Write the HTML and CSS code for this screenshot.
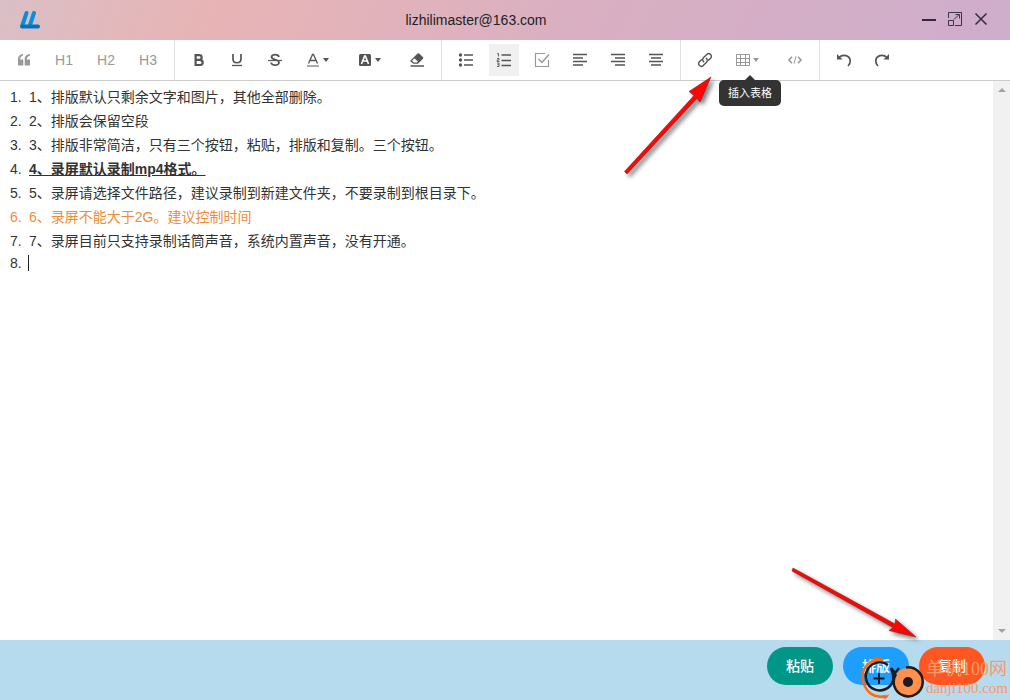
FILE: index.html
```html
<!DOCTYPE html>
<html lang="zh-CN">
<head>
<meta charset="utf-8">
<title>lizhilimaster@163.com</title>
<link rel="stylesheet" href="styles.css">
</head>
<body>
<div class="app">
  <header class="titlebar">
    <div class="brand">
      <svg width="22" height="20" viewBox="0 0 22 20" fill="none" stroke-linecap="round">
        <path d="M3.500 15 7.500 3M11 15 15 3" stroke="#0590df" stroke-width="4"/>
        <path d="M8.500 13 11.500 3.500" stroke="#c8c5d1" stroke-width="1"/>
        <path d="M3 16.500H19" stroke="#0870ba" stroke-width="4"/>
      </svg>
    </div>
    <h1 class="title">lizhilimaster@163.com</h1>
    <div class="window-controls">
      <button class="window-button" aria-label="最小化"><svg width="16" height="16" viewBox="0 0 16 16"><path d="M1 9H15" stroke="#33293b" stroke-width="2"/></svg></button>
      <button class="window-button" aria-label="最大化"><svg width="16" height="16" viewBox="0 0 16 16" fill="none" stroke="#3d3345"><path d="M1.500 7V1.500H14.500V14.500H8M1.500 9.500H6.500V14.500H1.500ZM7 8.500 12 3.500M8.500 3.500H12.500V7.500"/></svg></button>
      <button class="window-button" aria-label="关闭"><svg width="16" height="16" viewBox="0 0 16 16"><path d="M2.500 2.500 13.500 13.500M13.500 2.500 2.500 13.500" stroke="#33293b" stroke-width="1.500"/></svg></button>
    </div>
  </header>

  <div class="toolbar" role="toolbar" aria-label="编辑工具">
    <div class="group">
      <button class="tool muted" aria-label="引用"><svg width="16" height="16" viewBox="0 0 16 16" fill="currentColor"><path d="M2 13.500V7C2 4 4 2.200 7 2V3.500C5.400 3.800 4.300 5 4.100 7.500H7.300V13.500ZM8.700 13.500V7C8.700 4 11 2.200 14 2V3.500C12.400 3.800 11 5 10.800 7.500H14V13.500Z"/></svg></button>
      <button class="tool heading muted">H1</button>
      <button class="tool heading muted">H2</button>
      <button class="tool heading muted">H3</button>
    </div>
    <div class="group">
      <button class="tool" aria-label="粗体"><svg width="16" height="16" viewBox="0 0 16 16" fill="none" stroke="currentColor" stroke-width="2.200"><path d="M4.600 3.100H8C11.600 3.100 11.600 7.800 8 7.800H4.600H8.500C12.800 7.800 12.800 13 8.500 13H4.600V2"/></svg></button>
      <button class="tool" aria-label="下划线"><svg width="16" height="16" viewBox="0 0 16 16" fill="none" stroke="currentColor"><path d="M4 2V7C4 12 12 12 12 7V2" stroke-width="1.700"/><path d="M3 13.500H13" stroke-width="1.300"/></svg></button>
      <button class="tool" aria-label="删除线"><svg width="16" height="16" viewBox="0 0 16 16" fill="none" stroke="currentColor"><path d="M12 5C11.500 1.800 4.500 1.800 4.500 5C4.500 8 12 7 12 10.500C12 14.200 4.500 14 4.200 10.500" stroke-width="1.800"/><path d="M1 8.500H15" stroke-width="1.200"/></svg></button>
      <button class="tool wide" aria-label="文字颜色"><svg width="14" height="16" viewBox="0 0 14 16" fill="none" stroke="currentColor"><path d="M2.500 11.500 6.500 2.500H7.500L11.500 11.500M4 8.500H10" stroke-width="1.300"/><path d="M1 14H13" stroke-width="1"/></svg><span class="arrow"></span></button>
      <button class="tool wide" aria-label="背景色"><svg width="14" height="16" viewBox="0 0 14 16"><rect x="1" y="2" width="12" height="12" rx="1.500" fill="currentColor"/><path d="M3.500 12 6.600 4H7.400L10.500 12M4.700 9H9.300" fill="none" stroke="#fff" stroke-width="1.600"/></svg><span class="arrow"></span></button>
      <button class="tool" aria-label="清除格式"><svg width="16" height="16" viewBox="0 0 16 16"><path d="M1.500 8.500 8.500 1.500Q9.500 .8 10.500 1.700L14 5.200Q14.600 6 14 6.800L9 11.800H4.500L1.500 9.500Z" fill="currentColor"/><path d="M3 8.800 5.500 6.300 8.800 9.500 8 10.500H5Z" fill="#fff"/><path d="M1.500 14H15" stroke="currentColor" stroke-width="1.500"/></svg></button>
    </div>
    <div class="group">
      <button class="tool" aria-label="无序列表"><svg width="16" height="16" viewBox="0 0 16 16" fill="currentColor"><circle cx="2.500" cy="3" r="1.700"/><circle cx="2.500" cy="8" r="1.700"/><circle cx="2.500" cy="13" r="1.700"/><path d="M6 3H15M6 8H15M6 13H15" stroke="currentColor" stroke-width="1.500"/></svg></button>
      <button class="tool active" aria-label="有序列表" aria-pressed="true"><svg width="16" height="16" viewBox="0 0 16 16" fill="none" stroke="currentColor"><path d="M5.500 3H15M5.500 8.500H15M5.500 13.500H15" stroke-width="1.500"/><path d="M1 2 2.500 1.500V4.500M1 6.500H3V8H1.200V9.500H3.500M1 11H3V14.500H1M1.500 12.700H3" stroke-width=".9"/></svg></button>
      <button class="tool muted" aria-label="待办"><svg width="16" height="16" viewBox="0 0 16 16" fill="none" stroke="currentColor"><path d="M11 1.500H1.500V14.500H14.500V8" stroke-width="1.200"/><path d="M4.500 7 8 10.500 15 2.500" stroke-width="1.500"/></svg></button>
      <button class="tool" aria-label="左对齐"><svg width="16" height="16" viewBox="0 0 16 16" stroke="currentColor" stroke-width="1.300"><path d="M1 2.500H15M1 6H11M1 9.500H15M1 13H11"/></svg></button>
      <button class="tool" aria-label="右对齐"><svg width="16" height="16" viewBox="0 0 16 16" stroke="currentColor" stroke-width="1.300"><path d="M1 2.500H15M5 6H15M1 9.500H15M5 13H15"/></svg></button>
      <button class="tool" aria-label="居中对齐"><svg width="16" height="16" viewBox="0 0 16 16" stroke="currentColor" stroke-width="1.300"><path d="M1 2.500H15M3 6H13M1 9.500H15M3 13H13"/></svg></button>
    </div>
    <div class="group">
      <button class="tool" aria-label="链接"><svg width="16" height="16" viewBox="0 0 16 16" fill="none" stroke="currentColor" stroke-width="1.400" stroke-linecap="round"><path d="M6.700 9.800C5.200 8.300 5.600 6.600 6.600 5.600L9.800 2.400C12.500 .2 15.800 3.500 13.600 6.200L11.500 8.300M9.300 6.200C10.800 7.700 10.400 9.400 9.400 10.400L6.200 13.600C3.500 15.800 .2 12.500 2.400 9.800L4.500 7.700"/></svg></button>
      <div class="tool-wrap">
        <button class="tool wide muted" aria-label="插入表格" aria-describedby="table-tip"><svg width="16" height="16" viewBox="0 0 16 16" fill="none" stroke="currentColor"><path d="M1.500 2.500H14.500V13.500H1.500ZM1.500 6.500H14.500M1.500 10.500H14.500M5.500 2.500V13.500M10.500 2.500V13.500"/></svg><span class="arrow"></span></button>
        <span class="tooltip" id="table-tip" role="tooltip">插入表格</span>
      </div>
      <button class="tool muted" aria-label="代码"><svg width="16" height="16" viewBox="0 0 16 16" fill="none" stroke="currentColor"><path d="M5 4.700 2 8 5 11.300M11 4.700 14 8 11 11.300" stroke-width="1.600"/><path d="M9 4.300 7 11.700" stroke-width="1"/></svg></button>
    </div>
    <div class="group">
      <button class="tool" aria-label="撤销"><svg width="16" height="16" viewBox="0 0 16 16" fill="none" stroke="currentColor"><path d="M3 5.500C7 1.500 14.200 3.300 14.200 9.200C14.200 11.300 13.300 12.800 12 14" stroke-width="1.700"/><path d="M1 2V7.500H6.500Z" fill="currentColor" stroke="none"/></svg></button>
      <button class="tool" aria-label="重做"><svg width="16" height="16" viewBox="0 0 16 16" fill="none" stroke="currentColor"><path d="M13 5.500C9 1.500 1.800 3.300 1.800 9.200C1.800 11.300 2.700 12.800 4 14" stroke-width="1.700"/><path d="M15 2V7.500H9.500Z" fill="currentColor" stroke="none"/></svg></button>
    </div>
  </div>

  <main class="editor">
    <ol class="document">
      <li>1、排版默认只剩余文字和图片，其他全部删除。</li>
      <li>2、排版会保留空段</li>
      <li>3、排版非常简洁，只有三个按钮，粘贴，排版和复制。三个按钮。</li>
      <li><strong class="emphasis">4、录屏默认录制mp4格式。</strong></li>
      <li>5、录屏请选择文件路径，建议录制到新建文件夹，不要录制到根目录下。</li>
      <li class="warning">6、录屏不能大于2G。建议控制时间</li>
      <li>7、录屏目前只支持录制话筒声音，系统内置声音，没有开通。</li>
      <li class="empty"><span class="cursor"></span></li>
    </ol>
    <div class="scrollbar"><span class="scroll-up"></span><span class="scroll-down"></span></div>
  </main>

  <footer class="actions">
    <button class="action paste">粘贴</button>
    <button class="action layout">排版</button>
    <button class="action copy">复制</button>
  </footer>

  <svg class="pointer pointer-top" width="110" height="116" viewBox="0 0 110 116">
    <path d="M5.500 101.500 75 25.500 70 21.500 92 7 81 32 78 28.500 8 104Z" fill="#fb0505" stroke="#8b2020" stroke-width=".6"/>
  </svg>
  <svg class="pointer pointer-bottom" width="144" height="90" viewBox="0 0 144 90">
    <path d="M11 8 113 64 113.500 59 134 77 107 70.500 111 67.500 10 11Z" fill="#fb0505" stroke="#8b2020" stroke-width=".6"/>
  </svg>
  <div class="watermark">
    <svg width="64" height="44" viewBox="0 0 64 44" fill="none">
      <path d="M19 4C6 5 1 15 3 25C6 37 15 43 26 40" stroke="#ff6a0d" stroke-width="2.500"/>
      <path d="M10 6Q17-3 24 5ZM17 39Q24 42 29 38Q28 42 25 43Z" fill="#ff6a0d"/>
      <path d="M28 9A14 14 0 1 0 33 25Q34 19 31 12M31 12 35 17 39 12" stroke="#1d1a20" stroke-width="2.500"/>
      <path d="M19 17V28M13.500 22.500H24.500" stroke="#1d1a20" stroke-width="2"/>
      <circle cx="48" cy="26" r="14" fill="#ff914d"/>
      <path d="M46 11.500A14.500 14.500 0 1 1 36 18" stroke="#1d1a20" stroke-width="2.500"/>
      <circle cx="48" cy="26" r="5" fill="#1d1a20"/>
    </svg>
    <div class="watermark-text"><span class="watermark-name">单机100网</span><span class="watermark-url">danji100.com</span></div>
  </div>
</div>
</body>
</html>
```
FILE: styles.css
```css
* {
  box-sizing: border-box;
}

body {
  margin: 0;
  color: #333;
  font: 14px/24px "Liberation Sans", "Noto Sans CJK SC", sans-serif;
}

button {
  border: 0;
  padding: 0;
  background: none;
  color: inherit;
  font: inherit;
  cursor: pointer;
}

svg {
  display: block;
}

.app {
  position: relative;
  display: flex;
  flex-direction: column;
  min-height: 100vh;
  overflow: hidden;
  background: #fff;
}

.titlebar {
  display: flex;
  align-items: center;
  height: 40px;
  background: linear-gradient(115deg, #dabfc6 0%, #e8b4b5 21%, #dab0c1 55%, #ceadcc 100%);
}

.brand {
  width: 60px;
  padding-left: 19px;
}

.title {
  flex: 1;
  margin: 0;
  color: #222;
  font-size: 14px;
  font-weight: 400;
  text-align: center;
}

.window-controls {
  display: flex;
  gap: 10px;
  width: 118px;
  padding: 0 0 2px 29px;
}

.toolbar {
  display: flex;
  height: 41px;
  border-bottom: 1px solid #ccc;
}

.group {
  display: flex;
  align-items: center;
  padding: 0 5px;
  border-right: 1px solid #e2e2e2;
}

.group:last-child {
  border-right: 0;
}

.tool {
  display: flex;
  align-items: center;
  justify-content: center;
  width: 30px;
  height: 32px;
  margin: 0 4px;
  color: #555;
}

.tool.muted {
  color: #999;
}

.tool.heading {
  width: 34px;
}

.tool.wide {
  justify-content: flex-start;
  gap: 3px;
  width: 44px;
  padding-left: 8px;
}

.tool.active {
  background: #f0f0f0;
}

.tool-wrap {
  position: relative;
}

.tool-wrap .tool {
  gap: 2px;
  padding-left: 7px;
}

.arrow {
  border: 3px solid transparent;
  border-top: 4px solid currentColor;
  border-bottom: 0;
}

.tooltip {
  position: absolute;
  z-index: 2;
  top: 36px;
  left: 50%;
  padding: 0 9px;
  border-radius: 5px;
  background: #333;
  color: #fff;
  font-size: 11px;
  line-height: 26px;
  white-space: nowrap;
  transform: translateX(-50%);
}

.tooltip::before {
  content: "";
  position: absolute;
  bottom: 100%;
  left: 50%;
  margin-left: -5px;
  border: 5px solid transparent;
  border-top: 0;
  border-bottom-color: #333;
}

.editor {
  display: flex;
  flex: 1;
}

.document {
  flex: 1;
  margin: 0;
  padding: 4px 10px;
  list-style: none;
  counter-reset: line;
}

.document li {
  display: flex;
  counter-increment: line;
}

.document li::before {
  content: counter(line) ".";
  flex: none;
  width: 19px;
}

.document .empty {
  align-items: center;
  line-height: 20px;
}

.emphasis {
  text-decoration: underline;
}

.warning {
  color: #ed8d3b;
}

.cursor {
  width: 1px;
  height: 16px;
  margin-left: -1px;
  background: #222;
}

.scrollbar {
  display: flex;
  flex-direction: column;
  align-items: center;
  justify-content: space-between;
  width: 17px;
  padding: 7px 0;
  background: #f1f1f1;
}

.scroll-up,
.scroll-down {
  border: 4px solid transparent;
}

.scroll-up {
  border-top: 0;
  border-bottom-color: #a3a3a3;
}

.scroll-down {
  border-bottom: 0;
  border-top-color: #a3a3a3;
}

.actions {
  display: flex;
  justify-content: flex-end;
  gap: 10px;
  height: 60px;
  padding: 7px 25px;
  background: #b7dbee;
}

.action {
  width: 66px;
  height: 38px;
  border-radius: 19px;
  color: #fff;
  font-weight: 500;
}

.paste {
  background: #009688;
}

.layout {
  background: #1e9fff;
}

.copy {
  background: #ff5722;
}

.pointer {
  position: absolute;
  pointer-events: none;
  filter: drop-shadow(3px 3px 2px rgba(0, 0, 0, 0.5));
}

.pointer-top {
  top: 70px;
  left: 619px;
}

.pointer-bottom {
  right: 84px;
  bottom: 50px;
}

.watermark {
  position: absolute;
  right: 2px;
  bottom: 0;
  display: flex;
  align-items: center;
  gap: 2px;
  pointer-events: none;
}

.watermark-text {
  display: flex;
  flex-direction: column;
  color: #f79a67;
}

.watermark-name {
  font: 18px/20px "Liberation Serif", "Noto Sans CJK SC", serif;
}

.watermark-url {
  font: 15px/18px "Liberation Serif", serif;
}
```
